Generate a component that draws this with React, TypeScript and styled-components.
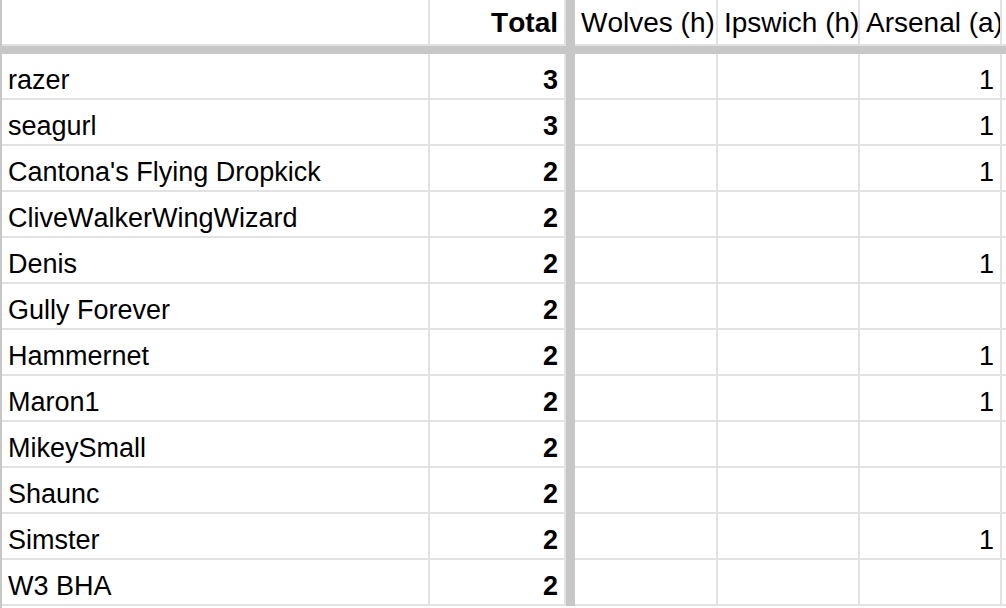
import React from "react"
import styled, { createGlobalStyle } from "styled-components"

const GlobalStyle = createGlobalStyle`
  html, body {
    margin: 0;
    padding: 0;
    background: #ffffff;
    overflow: hidden;
  }
`

const GRID = '#e2e2e2'
const FREEZE = '#c7c7c7'

const Sheet = styled.div`
  display: grid;
  grid-template-columns: 428px 136px 9px 143px 142px 142px 1fr;
  grid-template-rows: 46px 8px;
  grid-auto-rows: 46px;
  width: 1006px;
  height: 608px;
  box-sizing: border-box;
  border-left: 2px solid ${FREEZE};
  font-family: "Liberation Sans", Arial, Helvetica, sans-serif;
  font-size: 27px;
  font-kerning: none;
  color: #000;
  overflow: hidden;
`

interface CellProps {
  $align?: 'left' | 'right'
  $bold?: boolean
  $head?: boolean
}

const Cell = styled.div<CellProps>`
  display: flex;
  align-items: flex-end;
  justify-content: ${({ $align }) => $align === 'right' ? 'flex-end' : 'flex-start'};
  box-sizing: border-box;
  border-right: 2px solid ${GRID};
  border-bottom: 2px solid ${GRID};
  padding: 0 6px ${({ $head }) => $head ? '5px' : '2px'};
  white-space: nowrap;
  overflow: hidden;
  font-size: ${({ $head }) => $head ? '28px' : '27px'};
  font-weight: ${({ $bold }) => $bold ? 700 : 400};
  line-height: 1.15;
`

const FreezeCol = styled.div`
  background: ${FREEZE};
`

const FreezeRow = styled.div`
  grid-column: 1 / -1;
  background: ${FREEZE};
`

interface Row {
  name: string
  total: number
  arsenal?: number
}

const rows: Row[] = [
  { name: 'razer', total: 3, arsenal: 1 },
  { name: 'seagurl', total: 3, arsenal: 1 },
  { name: "Cantona's Flying Dropkick", total: 2, arsenal: 1 },
  { name: 'CliveWalkerWingWizard', total: 2 },
  { name: 'Denis', total: 2, arsenal: 1 },
  { name: 'Gully Forever', total: 2 },
  { name: 'Hammernet', total: 2, arsenal: 1 },
  { name: 'Maron1', total: 2, arsenal: 1 },
  { name: 'MikeySmall', total: 2 },
  { name: 'Shaunc', total: 2 },
  { name: 'Simster', total: 2, arsenal: 1 },
  { name: 'W3 BHA', total: 2 },
]

const App = () => (
  <>
    <GlobalStyle />
    <Sheet>
      <Cell $head />
      <Cell $head $align="right" $bold>Total</Cell>
      <FreezeCol />
      <Cell $head>Wolves (h)</Cell>
      <Cell $head>Ipswich (h)</Cell>
      <Cell $head>Arsenal (a)</Cell>
      <Cell $head />

      <FreezeRow />

      {rows.map(r => (
        <React.Fragment key={r.name}>
          <Cell>{r.name}</Cell>
          <Cell $align="right" $bold>{r.total}</Cell>
          <FreezeCol />
          <Cell />
          <Cell />
          <Cell $align="right">{r.arsenal ?? ''}</Cell>
          <Cell />
        </React.Fragment>
      ))}
    </Sheet>
  </>
)

export default App
